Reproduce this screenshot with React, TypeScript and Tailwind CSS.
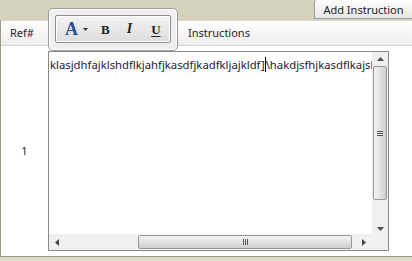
import React from "react";

const ui = { fontFamily: '"Noto Sans", "Open Sans", Arial, sans-serif' };
const serif = { fontFamily: '"Liberation Serif", "DejaVu Serif", serif' };

function Arrow({ dir }: { dir: "up" | "down" | "left" | "right" }) {
	const pts = {
		up: "0,4 3.5,0 7,4",
		down: "0,0 3.5,4 7,0",
		left: "4,0 0,3.5 4,7",
		right: "0,0 4,3.5 0,7",
	}[dir];
	const vert = dir === "up" || dir === "down";
	return (
		<svg width={vert ? 7 : 4} height={vert ? 4 : 7} viewBox={vert ? "0 0 7 4" : "0 0 4 7"}>
			<polygon points={pts} fill="#4a4a4a" />
		</svg>
	);
}

function Toolbar() {
	return (
		<div className="absolute left-[48px] top-[8px] h-[43px] w-[130px] rounded-[5px] border border-[#9a9a9a] bg-[#efefef] p-[6px] shadow-[inset_0_0_0_1px_#fff]">
			<div className="flex h-[28px] items-center rounded-[2px] border border-[#8e8e8e] bg-gradient-to-b from-[#f4f4f4] to-[#dcdcdc] pl-[9px] shadow-[inset_0_0_0_1px_#fff]">
				<span className="text-[18px] font-bold leading-none text-[#2d4f8f]" style={serif}>
					A
				</span>
				<svg className="ml-[5px]" width="5" height="3" viewBox="0 0 5 3">
					<polygon points="0,0 5,0 2.5,3" fill="#333" />
				</svg>
				<span className="ml-[13px] text-[13px] font-bold leading-none text-[#222]" style={serif}>
					B
				</span>
				<span className="ml-[17px] text-[14px] font-bold italic leading-none text-[#222]" style={serif}>
					I
				</span>
				<span className="ml-[19px] text-[13px] font-bold leading-none text-[#222] underline underline-offset-[2px]" style={serif}>
					U
				</span>
			</div>
		</div>
	);
}

function TextBox() {
	return (
		<div className="relative h-[200px] w-[341px] border border-[#8a8a8a] bg-white">
			<div className="flex h-full">
				<div className="flex min-w-0 flex-1 flex-col">
					<div className="relative min-w-0 flex-1 overflow-hidden">
						<div className="whitespace-nowrap pl-[1px] pt-[5px] text-[11.3px] leading-[16px] text-[#1e2030]" style={ui}>
							klasjdhfajklshdflkjahfjkasdfjkadfkljajkldf]<span className="border-l border-black" />\hakdjsfhjkasdflkajshd
						</div>
					</div>
					{/* horizontal scrollbar */}
					<div className="flex h-[16px] items-center bg-[#f0f0f0]">
						<div className="flex w-[16px] items-center justify-center">
							<Arrow dir="left" />
						</div>
						<div className="flex-1 pl-[73px] pr-[4px]">
							<div className="flex h-[14px] items-center justify-center rounded-[2px] border border-[#979797] bg-gradient-to-b from-[#f3f3f3] via-[#e2e2e2] to-[#cfcfcf]">
								<div className="flex gap-[1px]">
									<span className="h-[6px] w-[1px] bg-[#555]" />
									<span className="h-[6px] w-[1px] bg-[#555]" />
									<span className="h-[6px] w-[1px] bg-[#555]" />
								</div>
							</div>
						</div>
						<div className="flex w-[16px] items-center justify-center">
							<Arrow dir="right" />
						</div>
					</div>
				</div>
				{/* vertical scrollbar */}
				<div className="flex w-[16px] shrink-0 flex-col bg-[#f0f0f0]">
					<div className="flex h-[16px] items-center justify-center">
						<Arrow dir="up" />
					</div>
					<div className="flex-1 px-[1px] pb-[22px]">
						<div className="flex h-[134px] items-center justify-center rounded-[2px] border border-[#979797] bg-gradient-to-r from-[#f3f3f3] via-[#e2e2e2] to-[#cfcfcf]">
							<div className="flex flex-col gap-[1px]">
								<span className="h-[1px] w-[6px] bg-[#555]" />
								<span className="h-[1px] w-[6px] bg-[#555]" />
								<span className="h-[1px] w-[6px] bg-[#555]" />
							</div>
						</div>
					</div>
					<div className="flex h-[16px] items-center justify-center">
						<Arrow dir="down" />
					</div>
					<div className="h-[16px]" />
				</div>
			</div>
		</div>
	);
}

export default function App() {
	return (
		<div className="relative h-[261px] w-[412px] overflow-hidden bg-[#d6d3bd]" style={ui}>
			{/* top strip */}
			<div className="flex h-[20px] justify-end">
				<button className="h-[19px] w-[98px] rounded-tl-[3px] border-b border-l border-[#9a9a9a] bg-gradient-to-b from-white to-[#e6e6e6] text-[11px] leading-[17px] text-[#1e1e1e]">
					Add Instruction
				</button>
			</div>
			{/* grid */}
			<div className="h-[237px] border-b border-l border-[#9c9a86] bg-white">
				<div className="flex h-[26px] items-center border-b border-t border-[#d5d5d5] bg-gradient-to-b from-white to-[#ededed] text-[11px] text-[#1e1e1e]">
					<span className="w-[47px] pl-[9px]">Ref#</span>
					<span className="pl-[140px]">Instructions</span>
				</div>
				<div className="flex h-[210px]">
					<div className="flex w-[47px] items-center justify-center text-[11px] text-[#1e1e1e]">1</div>
					<div className="pt-[5px]">
						<TextBox />
					</div>
				</div>
			</div>
			<div className="h-[4px] bg-[#dedcc8]" />
			<Toolbar />
		</div>
	);
}
